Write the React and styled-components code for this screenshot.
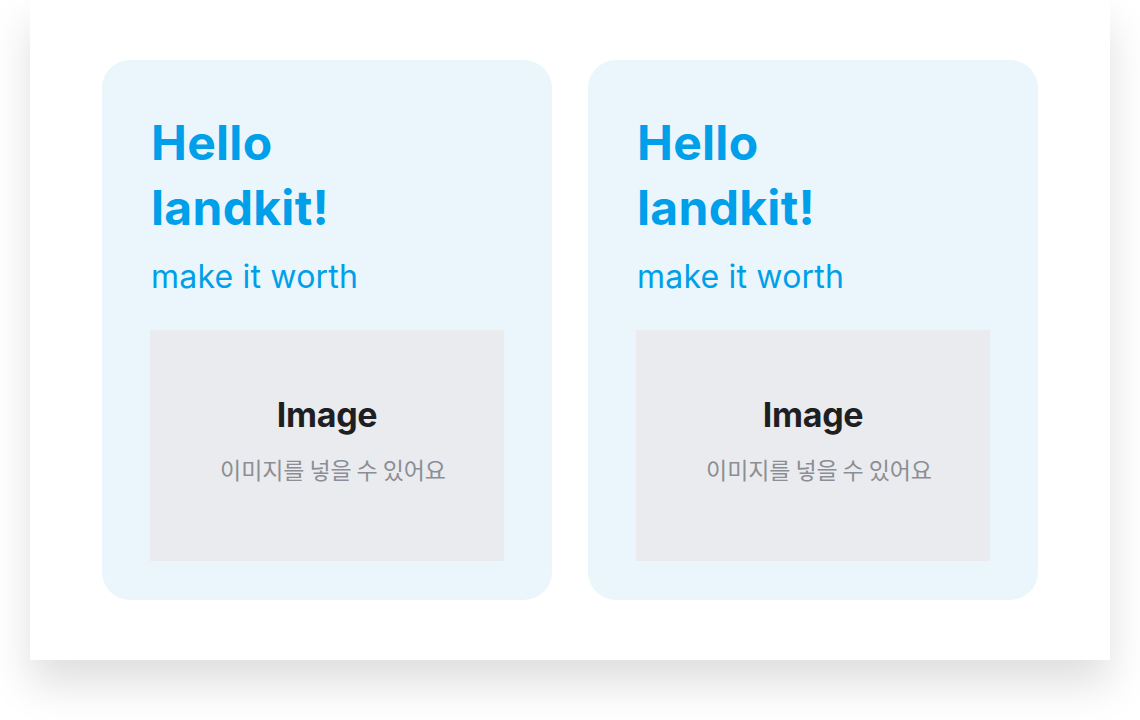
import React from "react";
import styled, { createGlobalStyle } from "styled-components";

const Global = createGlobalStyle`
  html, body { margin: 0; padding: 0; background: #ffffff; }
  body { font-family: Inter, "Noto Sans CJK KR", sans-serif; }
`;

const Page = styled.div`
  padding: 0 30px 60px;
`;

const Panel = styled.main`
  background: #ffffff;
  height: 660px;
  box-sizing: border-box;
  padding: 60px 72px;
  display: flex;
  gap: 36px;
  box-shadow: 0 24px 40px rgba(0, 0, 0, 0.13);
`;

const Card = styled.section`
  width: 450px;
  height: 540px;
  box-sizing: border-box;
  background: #eaf6fb;
  border-radius: 28px;
  padding: 50px 48px 39px;
  display: flex;
  flex-direction: column;
`;

const Title = styled.h1`
  margin: 0 0 0 1px;
  font-family: Inter, sans-serif;
  font-weight: 700;
  font-size: 48px;
  line-height: 65px;
  color: #009fe9;
  letter-spacing: 0.3px;
`;

const Subtitle = styled.p`
  margin: 15px 0 0 1px;
  font-family: Inter, sans-serif;
  font-weight: 400;
  font-size: 32px;
  line-height: 44px;
  letter-spacing: 0.2px;
  color: #009fe9;
`;

const ImageBox = styled.div`
  margin-top: auto;
  height: 231px;
  box-sizing: border-box;
  padding-bottom: 13px;
  background: #e9ebee;
  display: flex;
  flex-direction: column;
  align-items: center;
  justify-content: center;
  gap: 19px;
`;

const ImageLabel = styled.div`
  font-family: Inter, sans-serif;
  font-weight: 700;
  font-size: 34px;
  line-height: 40px;
  letter-spacing: -0.3px;
  color: #1e1f23;
`;

const ImageHint = styled.div`
  padding-left: 12px;
  font-family: "Noto Sans CJK KR", sans-serif;
  font-size: 23px;
  line-height: 30px;
  letter-spacing: -0.1px;
  color: #8b8e95;
`;

function PromoCard() {
  return (
    <Card>
      <Title>
        Hello
        <br />
        landkit!
      </Title>
      <Subtitle>make it worth</Subtitle>
      <ImageBox>
        <ImageLabel>Image</ImageLabel>
        <ImageHint>이미지를 넣을 수 있어요</ImageHint>
      </ImageBox>
    </Card>
  );
}

export default function App() {
  return (
    <>
      <Global />
      <Page>
        <Panel>
          <PromoCard />
          <PromoCard />
        </Panel>
      </Page>
    </>
  );
}
